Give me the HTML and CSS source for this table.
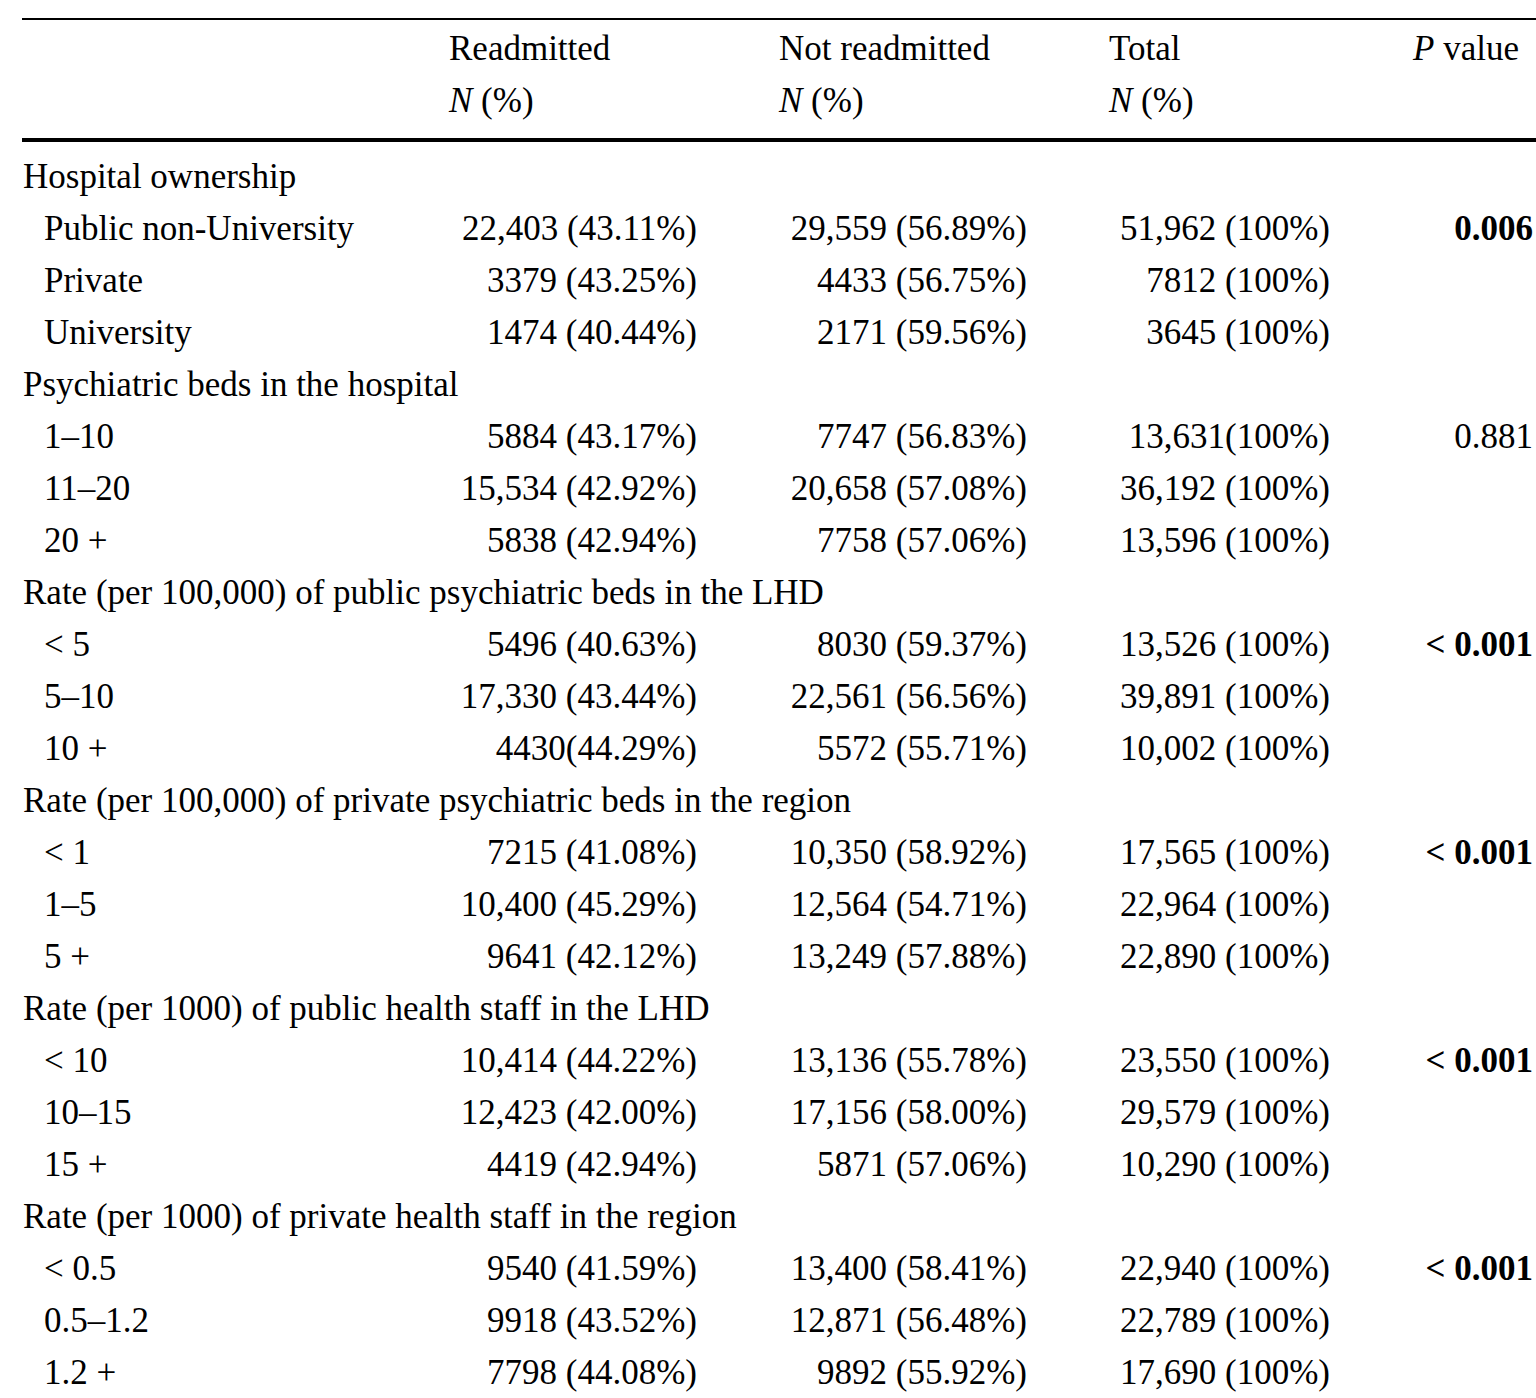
FILE: index.html
```html
<!DOCTYPE html>
<html lang="en">
<head>
<meta charset="utf-8">
<title>Readmission table</title>
<link rel="stylesheet" href="styles.css">
</head>
<body>
<table class="tbl">
  <colgroup>
    <col class="c-label">
    <col class="c-num">
    <col class="c-num">
    <col class="c-total">
    <col class="c-p">
  </colgroup>
  <thead>
    <tr class="hd1">
      <th></th>
      <th class="h">Readmitted</th>
      <th class="h">Not readmitted</th>
      <th class="h">Total</th>
      <th class="hp"><i>P</i> value</th>
    </tr>
    <tr class="hd2">
      <th></th>
      <th class="h"><i>N</i> (%)</th>
      <th class="h"><i>N</i> (%)</th>
      <th class="h"><i>N</i> (%)</th>
      <th class="hp"></th>
    </tr>
  </thead>
  <tbody>
    <tr class="grp first"><td colspan="5">Hospital ownership</td></tr>
    <tr><td class="sub">Public non-University</td><td class="n">22,403 (43.11%)</td><td class="n">29,559 (56.89%)</td><td class="t">51,962 (100%)</td><td class="p"><b>0.006</b></td></tr>
    <tr><td class="sub">Private</td><td class="n">3379 (43.25%)</td><td class="n">4433 (56.75%)</td><td class="t">7812 (100%)</td><td class="p"></td></tr>
    <tr><td class="sub">University</td><td class="n">1474 (40.44%)</td><td class="n">2171 (59.56%)</td><td class="t">3645 (100%)</td><td class="p"></td></tr>

    <tr class="grp"><td colspan="5">Psychiatric beds in the hospital</td></tr>
    <tr><td class="sub">1–10</td><td class="n">5884 (43.17%)</td><td class="n">7747 (56.83%)</td><td class="t">13,631(100%)</td><td class="p">0.881</td></tr>
    <tr><td class="sub">11–20</td><td class="n">15,534 (42.92%)</td><td class="n">20,658 (57.08%)</td><td class="t">36,192 (100%)</td><td class="p"></td></tr>
    <tr><td class="sub">20 +</td><td class="n">5838 (42.94%)</td><td class="n">7758 (57.06%)</td><td class="t">13,596 (100%)</td><td class="p"></td></tr>

    <tr class="grp"><td colspan="5">Rate (per 100,000) of public psychiatric beds in the LHD</td></tr>
    <tr><td class="sub">&lt; 5</td><td class="n">5496 (40.63%)</td><td class="n">8030 (59.37%)</td><td class="t">13,526 (100%)</td><td class="p"><b>&lt; 0.001</b></td></tr>
    <tr><td class="sub">5–10</td><td class="n">17,330 (43.44%)</td><td class="n">22,561 (56.56%)</td><td class="t">39,891 (100%)</td><td class="p"></td></tr>
    <tr><td class="sub">10 +</td><td class="n">4430(44.29%)</td><td class="n">5572 (55.71%)</td><td class="t">10,002 (100%)</td><td class="p"></td></tr>

    <tr class="grp"><td colspan="5">Rate (per 100,000) of private psychiatric beds in the region</td></tr>
    <tr><td class="sub">&lt; 1</td><td class="n">7215 (41.08%)</td><td class="n">10,350 (58.92%)</td><td class="t">17,565 (100%)</td><td class="p"><b>&lt; 0.001</b></td></tr>
    <tr><td class="sub">1–5</td><td class="n">10,400 (45.29%)</td><td class="n">12,564 (54.71%)</td><td class="t">22,964 (100%)</td><td class="p"></td></tr>
    <tr><td class="sub">5 +</td><td class="n">9641 (42.12%)</td><td class="n">13,249 (57.88%)</td><td class="t">22,890 (100%)</td><td class="p"></td></tr>

    <tr class="grp"><td colspan="5">Rate (per 1000) of public health staff in the LHD</td></tr>
    <tr><td class="sub">&lt; 10</td><td class="n">10,414 (44.22%)</td><td class="n">13,136 (55.78%)</td><td class="t">23,550 (100%)</td><td class="p"><b>&lt; 0.001</b></td></tr>
    <tr><td class="sub">10–15</td><td class="n">12,423 (42.00%)</td><td class="n">17,156 (58.00%)</td><td class="t">29,579 (100%)</td><td class="p"></td></tr>
    <tr><td class="sub">15 +</td><td class="n">4419 (42.94%)</td><td class="n">5871 (57.06%)</td><td class="t">10,290 (100%)</td><td class="p"></td></tr>

    <tr class="grp"><td colspan="5">Rate (per 1000) of private health staff in the region</td></tr>
    <tr><td class="sub">&lt; 0.5</td><td class="n">9540 (41.59%)</td><td class="n">13,400 (58.41%)</td><td class="t">22,940 (100%)</td><td class="p"><b>&lt; 0.001</b></td></tr>
    <tr><td class="sub">0.5–1.2</td><td class="n">9918 (43.52%)</td><td class="n">12,871 (56.48%)</td><td class="t">22,789 (100%)</td><td class="p"></td></tr>
    <tr><td class="sub">1.2 +</td><td class="n">7798 (44.08%)</td><td class="n">9892 (55.92%)</td><td class="t">17,690 (100%)</td><td class="p"></td></tr>
  </tbody>
</table>
</body>
</html>
```

FILE: styles.css
```css
html, body {
  margin: 0;
  padding: 0;
  background: #fff;
}

body {
  font-family: "Liberation Serif", "Times New Roman", serif;
  font-size: 35px;
  line-height: 52px;
  color: #000;
}

.tbl {
  margin: 18px 0 0 22px;
  width: 1514px;
  table-layout: fixed;
  border-collapse: separate;
  border-spacing: 0;
}

.c-label { width: 427px; }
.c-num { width: 330px; }
.c-total { width: 251px; }
.c-p { width: 176px; }

.tbl th,
.tbl td {
  padding: 0;
  white-space: nowrap;
  font-weight: normal;
  vertical-align: baseline;
}

.hd1 th {
  border-top: 2px solid #000;
  padding-top: 3px;
}

.hd2 th {
  border-bottom: 4px solid #000;
  padding-bottom: 11px;
}

.h {
  text-align: left;
}

.hp {
  text-align: right;
  padding-right: 17px !important;
}

.first td {
  padding-top: 9px;
}

.grp td {
  padding-left: 1px;
}

.sub {
  padding-left: 22px !important;
}

.n {
  text-align: right;
  padding-right: 82px !important;
}

.t {
  text-align: right;
  padding-right: 30px !important;
}

.p {
  text-align: right;
  padding-right: 3px !important;
}

.p b {
  font-weight: bold;
}
```
